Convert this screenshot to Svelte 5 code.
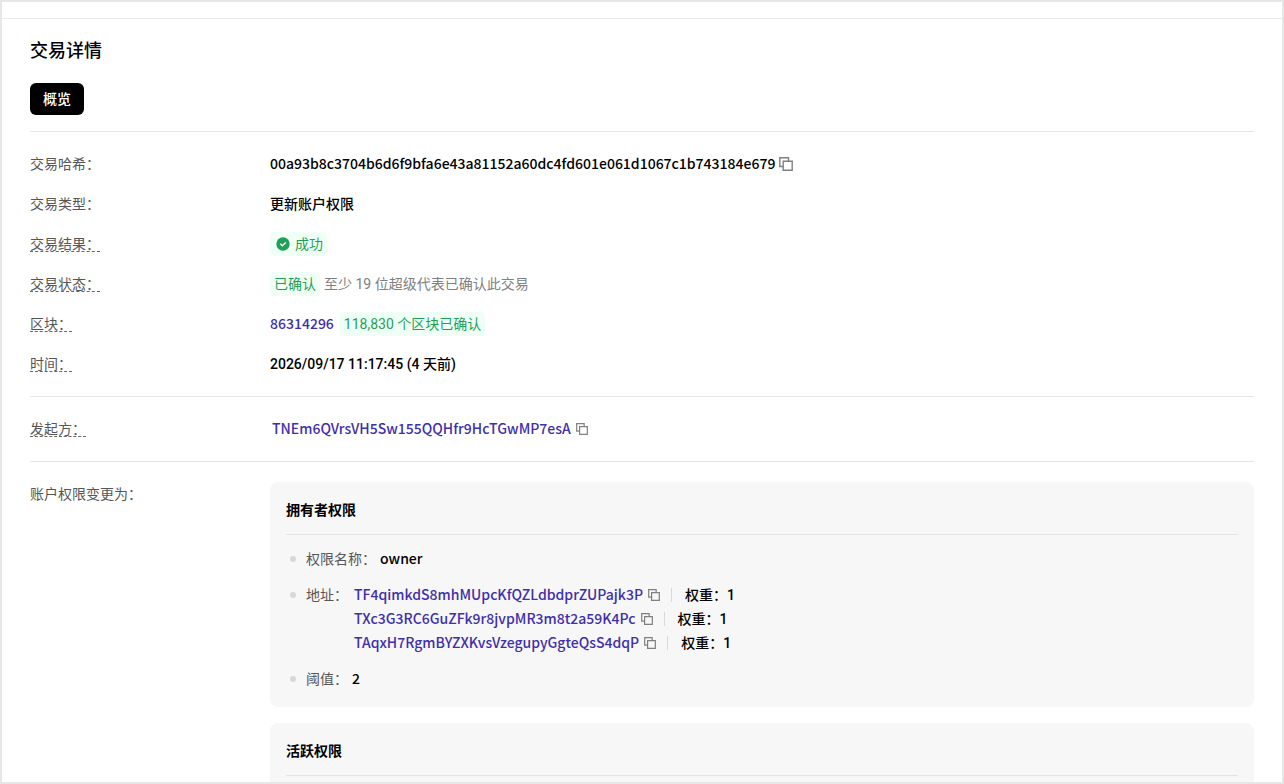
<script lang="ts">
  type Key = { address: string; weight: number };

  const TX_HASH = "00a93b8c3704b6d6f9bfa6e43a81152a60dc4fd601e061d1067c1b743184e679";
  const BLOCK = 86314296;
  const SENDER = "TNEm6QVrsVH5Sw155QQHfr9HcTGwMP7esA";

  const ownerKeys: Key[] = [
    { address: "TF4qimkdS8mhMUpcKfQZLdbdprZUPajk3P", weight: 1 },
    { address: "TXc3G3RC6GuZFk9r8jvpMR3m8t2a59K4Pc", weight: 1 },
    { address: "TAqxH7RgmBYZXKvsVzegupyGgteQsS4dqP", weight: 1 },
  ];

  function copy(text: string) {
    navigator.clipboard?.writeText(text);
  }
</script>

{#snippet copyButton(text: string)}
  <button type="button" class="copy" aria-label="复制" onclick={() => copy(text)}>
    <svg viewBox="0 0 14 14" aria-hidden="true">
      <path d="M3.5 9.5H.8V.8h8.7v2.7M4.2 4.2h9v9h-9z" fill="none" stroke="currentColor" stroke-width="1.4" />
    </svg>
  </button>
{/snippet}

<div class="frame">
  <div class="topbar"></div>
  <main>
    <h1>交易详情</h1>
    <div class="tabs">
      <button type="button" class="tab">概览</button>
    </div>

    <dl class="section">
      <div class="row">
        <dt>交易哈希：</dt>
        <dd class="hash">
          <div><span class="code">{TX_HASH}</span></div>
          {@render copyButton(TX_HASH)}
        </dd>
      </div>
      <div class="row">
        <dt>交易类型：</dt>
        <dd>更新账户权限</dd>
      </div>
      <div class="row">
        <dt><span class="hint">交易结果：</span></dt>
        <dd>
          <span class="badge result">
            <svg viewBox="0 0 14 14" aria-hidden="true">
              <circle cx="7" cy="7" r="6.7" fill="currentColor" />
              <path d="M4.3 6.8l2 2 3.5-3.4" fill="none" stroke="#fff" stroke-width="1.4" />
            </svg>
            成功
          </span>
        </dd>
      </div>
      <div class="row">
        <dt><span class="hint">交易状态：</span></dt>
        <dd>
          <span class="badge">已确认</span>
          <span class="note">至少 19 位超级代表已确认此交易</span>
        </dd>
      </div>
      <div class="row">
        <dt><span class="hint">区块：</span></dt>
        <dd class="block">
          <div><a class="code" href={`#/block/${BLOCK}`}>{BLOCK}</a></div>
          <span class="badge">118,830 个区块已确认</span>
        </dd>
      </div>
      <div class="row">
        <dt><span class="hint">时间：</span></dt>
        <dd>2026/09/17 11:17:45 (4 天前)</dd>
      </div>
    </dl>

    <dl class="section">
      <div class="row">
        <dt><span class="hint">发起方：</span></dt>
        <dd class="address">
          <div><a class="code" href={`#/address/${SENDER}`}>{SENDER}</a></div>
          {@render copyButton(SENDER)}
        </dd>
      </div>
    </dl>

    <dl class="section">
      <div class="row top">
        <dt>账户权限变更为：</dt>
        <dd class="cards">
          <section class="card">
            <h2>拥有者权限</h2>
            <ul>
              <li>
                <span class="key">权限名称：</span>
                <div><span class="code">owner</span></div>
              </li>
              <li>
                <span class="key">地址：</span>
                <div>
                  {#each ownerKeys as k}
                    <div class="address">
                      <div><a class="code" href={`#/address/${k.address}`}>{k.address}</a></div>
                      {@render copyButton(k.address)}
                      <span class="weight">权重：{k.weight}</span>
                    </div>
                  {/each}
                </div>
              </li>
              <li>
                <span class="key">阈值：</span>
                <div><span class="code">2</span></div>
              </li>
            </ul>
          </section>
          <section class="card">
            <h2>活跃权限</h2>
          </section>
        </dd>
      </div>
    </dl>
  </main>
</div>

<style>
  :global(body) {
    background: #fff;
  }

  .frame {
    box-sizing: border-box;
    height: 100vh;
    overflow: hidden;
    border: 2px solid #e6e7e7;
    color: #000;
    font: 500 14px/24px Roboto, "Noto Sans CJK SC", sans-serif;
  }
  .topbar {
    height: 16px;
    border-bottom: 1px solid #e8e8e8;
  }
  main {
    padding: 18px 28px 0;
  }

  h1 {
    margin: 0;
    font-size: 18px;
    line-height: 28px;
    font-weight: 500;
  }
  .tabs {
    display: flex;
    padding: 18px 0 16px;
  }
  .tab {
    height: 32px;
    padding: 0 13px;
    border: 0;
    border-radius: 6px;
    background: #000;
    color: #fff;
    font: inherit;
    cursor: pointer;
  }

  .section {
    margin: 0;
    padding: 12px 0;
    border-top: 1px solid #e6e6e6;
  }
  .row {
    display: grid;
    grid-template-columns: 240px minmax(0, 1fr);
    align-items: center;
    min-height: 40px;
  }
  .row.top {
    align-items: start;
  }
  .row.top dt {
    padding-top: 8px;
  }
  dt {
    color: #565656;
    font-weight: 400;
  }
  dd {
    display: flex;
    align-items: center;
    gap: 4px;
    margin: 0;
  }
  .hint {
    display: inline-block;
    line-height: 14px;
    border-bottom: 1px dashed #666;
    cursor: help;
  }

  /* hashes and addresses, kept on the baseline of the surrounding text */
  .code {
    font-family: "Noto Sans CJK SC", sans-serif;
    line-height: 16px;
  }
  a {
    color: #3f2fab;
    text-decoration: none;
  }
  a:hover {
    text-decoration: underline;
  }

  .badge {
    padding: 0 4px;
    border-radius: 4px;
    background: #f0fff5;
    color: #1f9f58;
    font-weight: 400;
  }
  .result {
    display: flex;
    align-items: center;
    gap: 5px;
    padding-left: 6px;
  }
  .result svg {
    width: 14px;
    height: 14px;
  }
  .note {
    color: #808080;
    font-weight: 400;
  }
  .block {
    gap: 6px;
  }

  .copy {
    display: flex;
    padding: 0;
    border: 0;
    background: none;
    color: #808080;
    cursor: pointer;
  }
  .copy svg {
    width: 12px;
    height: 12px;
  }
  .hash .copy svg {
    width: 14px;
    height: 14px;
  }
  .address {
    display: flex;
    align-items: center;
    gap: 5px;
    padding-left: 2px;
  }
  .weight {
    display: flex;
    align-items: center;
    margin-left: 6px;
  }
  .weight::before {
    content: "";
    height: 14px;
    margin-right: 13px;
    border-left: 1px solid #d9d9d9;
  }

  .cards {
    flex-direction: column;
    align-items: stretch;
    gap: 16px;
    padding-top: 8px;
  }
  .card {
    padding: 16px;
    border-radius: 8px;
    background: #f7f7f7;
  }
  h2 {
    margin: 0;
    padding-bottom: 12px;
    border-bottom: 1px solid #e5e5e5;
    font-size: 14px;
    line-height: 24px;
    font-weight: 700;
  }
  ul {
    display: flex;
    flex-direction: column;
    gap: 12px;
    margin: 0;
    padding: 12px 0 0;
    list-style: none;
  }
  li {
    display: flex;
    gap: 4px;
    padding-left: 4px;
  }
  li::before {
    content: "";
    width: 6px;
    height: 6px;
    margin: 9px 6px 0 0;
    border-radius: 50%;
    background: #d8d8d8;
  }
  .key {
    color: #565656;
    font-weight: 400;
  }
</style>
